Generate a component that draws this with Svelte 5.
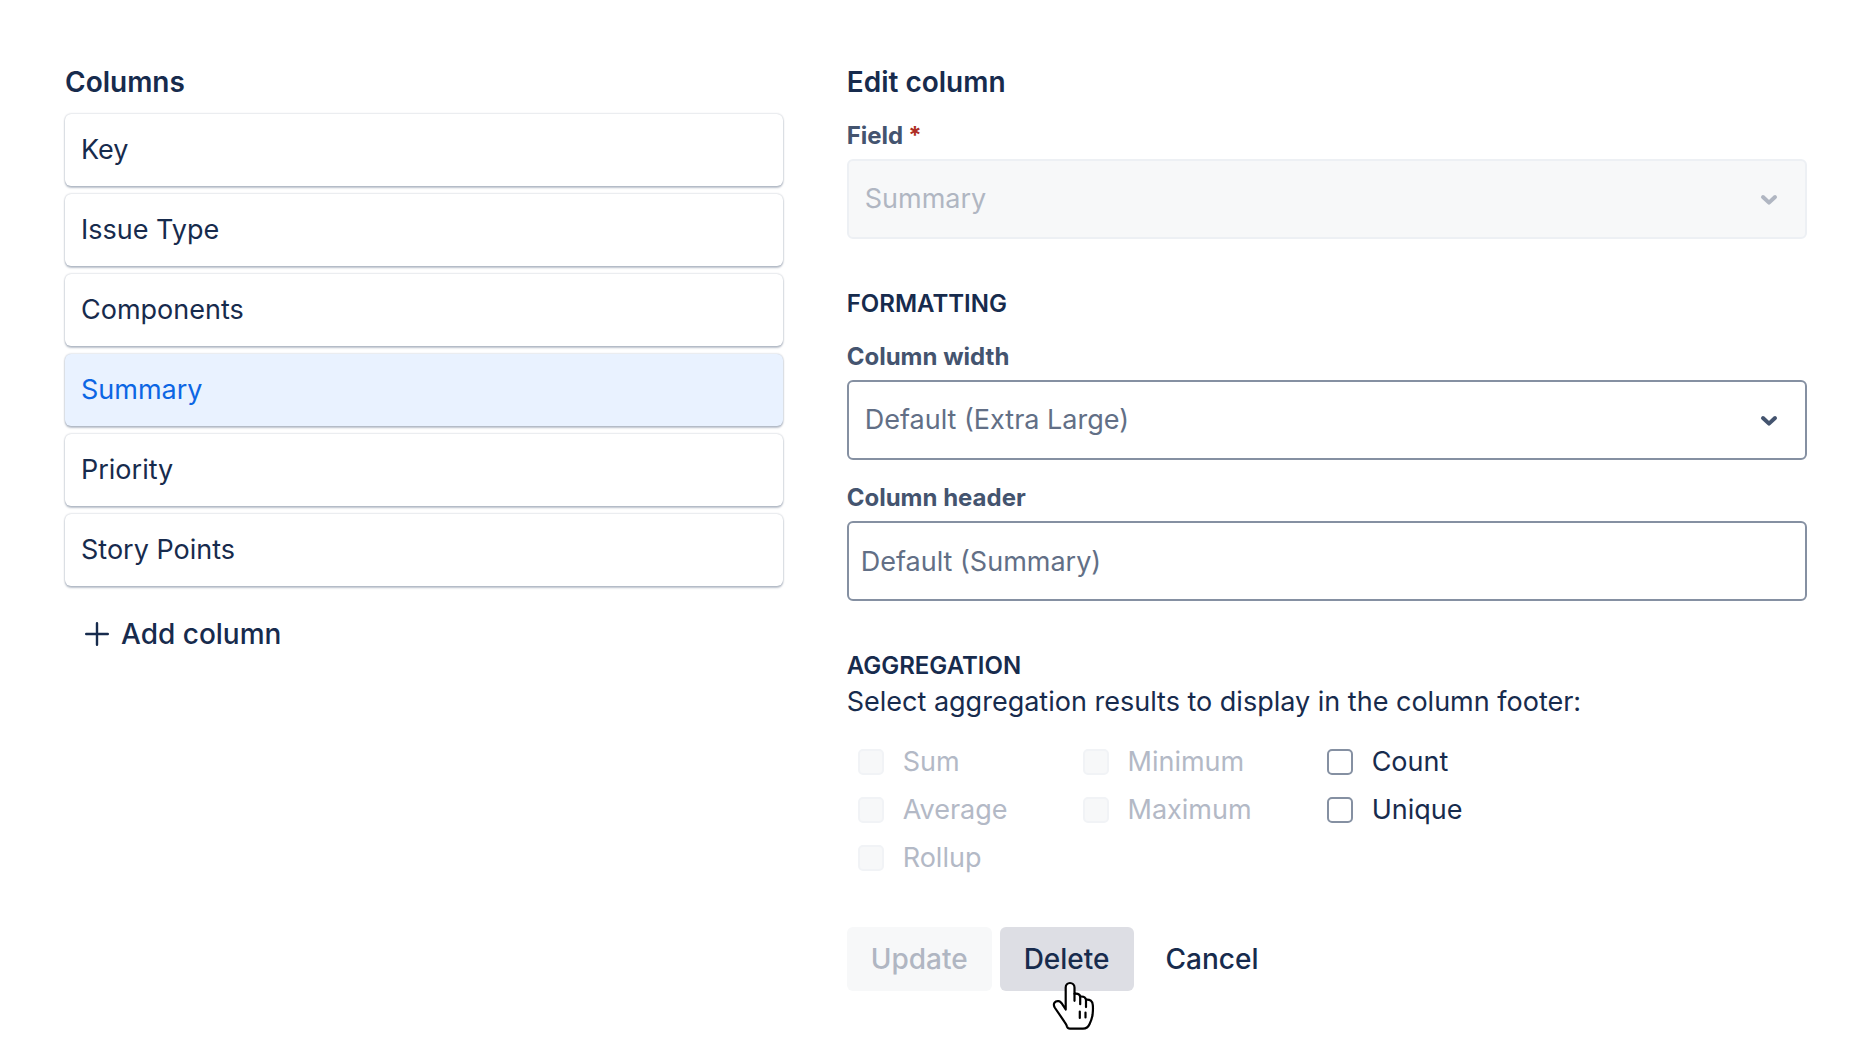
<script>
	let columns = ["Key", "Issue Type", "Components", "Summary", "Priority", "Story Points"];
	let selected = "Summary";

	let widths = ["Default (Extra Large)", "Small", "Medium", "Large"];
	let width = widths[0];
	let header = "";

	let aggregations = [
		[
			{ name: "Sum", disabled: true },
			{ name: "Average", disabled: true },
			{ name: "Rollup", disabled: true },
		],
		[
			{ name: "Minimum", disabled: true },
			{ name: "Maximum", disabled: true },
		],
		[
			{ name: "Count", disabled: false },
			{ name: "Unique", disabled: false },
		],
	];
</script>

<main class="editor">
	<section class="columns">
		<h2>Columns</h2>
		<ul>
			{#each columns as column}
				<li>
					<button
						type="button"
						class="item"
						class:selected={column === selected}
						on:click={() => (selected = column)}
					>
						{column}
					</button>
				</li>
			{/each}
		</ul>
		<button type="button" class="btn add">
			<svg width="24" height="24" viewBox="0 0 24 24" aria-hidden="true">
				<path d="M12 1.2v21.6M1.2 12h21.6" />
			</svg>
			Add column
		</button>
	</section>

	<form class="edit" on:submit|preventDefault>
		<h2>Edit column</h2>

		<div class="field">
			<label for="field">Field<span class="required">*</span></label>
			<div class="select">
				<select id="field" disabled>
					<option>{selected}</option>
				</select>
				<svg width="18" height="12" viewBox="0 0 18 12" aria-hidden="true">
					<path d="M3 3l6 5.6L15 3" />
				</svg>
			</div>
		</div>

		<h3>Formatting</h3>

		<div class="field">
			<label for="width">Column width</label>
			<div class="select">
				<select id="width" bind:value={width}>
					{#each widths as option}
						<option>{option}</option>
					{/each}
				</select>
				<svg width="18" height="12" viewBox="0 0 18 12" aria-hidden="true">
					<path d="M3 3l6 5.6L15 3" />
				</svg>
			</div>
		</div>

		<div class="field">
			<label for="header">Column header</label>
			<input
				id="header"
				class="text"
				type="text"
				placeholder="Default ({selected})"
				bind:value={header}
			/>
		</div>

		<h3>Aggregation</h3>
		<p>Select aggregation results to display in the column footer:</p>

		<div class="checks">
			{#each aggregations as group}
				<div class="group">
					{#each group as item}
						<label class="check" class:disabled={item.disabled}>
							<input type="checkbox" disabled={item.disabled} />
							{item.name}
						</label>
					{/each}
				</div>
			{/each}
		</div>

		<div class="actions">
			<button type="submit" class="btn update" disabled>Update</button>
			<div class="hovered">
				<button type="button" class="btn delete">Delete</button>
				<svg class="pointer" width="44" height="50" viewBox="0 0 44 50" aria-hidden="true">
					<path
						d="M13.7 28.5V6.6C13.7 3.8 15.6 2 18 2s4.5 1.8 4.5 4.6v6.2c3-.4 5.2.5 5.7 2.8 3-.4 5.2.6 5.8 3 4-.4 6.6 1.4 6.8 5.4.3 3 .2 6-.2 9.5-.5 3.5-1.6 6.5-3 9.5-1.3 3-3.4 4.6-6.6 4.600H18c-1.500 0-2.600-.8-3.100-2.300-.5-1.700-1.300-3-2.400-4.500L2.700 26.500C.6 22.700 3 19.500 6.800 20.200c1.200.2 2 1 2.800 2z"
					/>
					<path d="M22.5 12.8v7M28.2 15.6v7.6M34 18.6v7.5M27.8 30.5V37M33.5 31.5v5" />
				</svg>
			</div>
			<button type="button" class="btn cancel">Cancel</button>
		</div>
	</form>
</main>

<style>
	:global(body) {
		background: #fff;
	}

	.editor {
		display: grid;
		grid-template-columns: 41.2% 1fr;
		gap: 64px;
		padding: 66px 68px 56px 65px;
		font-family: Inter, "Liberation Sans", sans-serif;
		font-size: 27px;
		line-height: 32px;
		color: #172b4d;
	}

	h2,
	h3,
	p,
	ul {
		margin: 0;
		padding: 0;
	}

	h2 {
		font-size: 28px;
		font-weight: 600;
		line-height: 32px;
	}

	h3 {
		margin-top: 48px;
		font-size: 24px;
		font-weight: 600;
		line-height: 34px;
		text-transform: uppercase;
	}

	button,
	input,
	select {
		box-sizing: border-box;
		margin: 0;
		font: inherit;
		color: inherit;
	}

	ul {
		display: grid;
		gap: 8px;
		margin-top: 16px;
		list-style: none;
	}

	.item {
		display: block;
		width: 100%;
		height: 72px;
		padding: 0 16px;
		border: none;
		border-radius: 6px;
		background: #fff;
		box-shadow:
			0 2px 2px rgba(9, 30, 66, 0.25),
			0 0 2px rgba(9, 30, 66, 0.31);
		text-align: left;
		cursor: pointer;
	}

	.item.selected {
		background: #e9f2ff;
		color: #0c66e4;
	}

	.btn {
		height: 64px;
		padding: 0 24px;
		border: none;
		border-radius: 6px;
		background: none;
		font-size: 28px;
		font-weight: 500;
		cursor: pointer;
	}

	.add {
		display: flex;
		align-items: center;
		gap: 12px;
		margin-top: 16px;
		padding: 0 20px;
	}

	.add path {
		fill: none;
		stroke: #172b4d;
		stroke-width: 2.4;
		stroke-linecap: round;
	}

	.field {
		margin-top: 21px;
	}

	h3 + .field {
		margin-top: 19px;
	}

	.field label {
		display: block;
		margin-bottom: 6px;
		font-size: 24px;
		font-weight: 700;
		line-height: 34px;
		color: #44546f;
	}

	.required {
		padding-left: 5px;
		color: #ae2e24;
	}

	.select {
		position: relative;
	}

	select,
	.text {
		display: block;
		width: 100%;
		height: 80px;
		border: 2px solid #8590a2;
		border-radius: 6px;
		background: #fff;
		color: #626f86;
	}

	select {
		padding: 0 64px 0 16px;
		appearance: none;
	}

	.text {
		padding: 0 12px;
	}

	.text::placeholder {
		color: #626f86;
		opacity: 1;
	}

	select:disabled {
		border-color: #edf0f4;
		background: #f7f8f9;
		color: #b0b6c2;
		opacity: 1;
	}

	.select svg {
		position: absolute;
		top: 35px;
		right: 29px;
		pointer-events: none;
	}

	.select path {
		fill: none;
		stroke: #44546f;
		stroke-width: 4;
		stroke-linecap: round;
		stroke-linejoin: round;
	}

	select:disabled + svg path {
		stroke: #b0b6c2;
	}

	p {
		margin-top: 3px;
	}

	.checks {
		display: flex;
		gap: 75px;
		margin-top: 28px;
		padding-left: 11px;
	}

	.group {
		display: flex;
		flex-direction: column;
		gap: 16px;
	}

	.check {
		display: flex;
		align-items: center;
		gap: 19px;
	}

	.check.disabled {
		color: #b3b9c6;
	}

	.check input {
		width: 26px;
		height: 26px;
		border: 2px solid #8590a2;
		border-radius: 5px;
		background: #fff;
		appearance: none;
	}

	.check input:checked {
		border-color: #0c66e4;
		background: #0c66e4;
	}

	.check input:disabled {
		border-color: #f1f3f6;
		background: #f7f8f9;
	}

	.actions {
		display: flex;
		gap: 8px;
		margin-top: 53px;
	}

	.update {
		background: #f7f8f9;
		color: #b0b6c2;
		cursor: default;
	}

	.hovered {
		position: relative;
	}

	.delete {
		background: #dddee4;
	}

	.pointer {
		position: absolute;
		top: 54px;
		left: 52px;
		pointer-events: none;
	}

	.pointer path {
		fill: #fff;
		stroke: #000;
		stroke-width: 2.2;
		stroke-linecap: round;
		stroke-linejoin: round;
	}
</style>
